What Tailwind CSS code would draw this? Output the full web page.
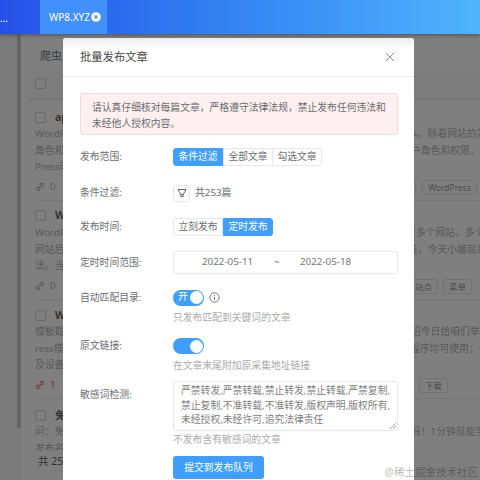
<!DOCTYPE html>
<html lang="zh">
<head>
    <meta charset="UTF-8">
    <title>批量发布文章</title>
    <script src="https://cdn.jsdelivr.net/npm/@tailwindcss/browser@4"></script>
</head>
<body class="font-['Noto_Sans','Noto_Sans_CJK_SC',sans-serif]">
    <div class="relative w-[480px] h-[480px] overflow-hidden bg-white">
        <!-- top bar -->
        <div class="relative z-10 h-[34px] flex bg-gradient-to-r from-[#2750e8] to-[#50b4fd] text-white text-[10px] shadow-[0_1px_4px_rgba(0,0,0,0.4)]">
            <div class="w-[40px] leading-[36px] overflow-hidden">...</div>
            <div class="w-[67px] bg-[#4190fc] flex items-center pl-[9px] gap-[1px]">
                <span>WP8.XYZ</span>
                <svg width="10" height="10" viewBox="0 0 10 10"><circle cx="5" cy="5" r="4.8" fill="#fff"/><path d="M3.3 3.3l3.4 3.4M6.7 3.3l-3.4 3.4" stroke="#4190fc" stroke-width="1.2"/></svg>
            </div>
        </div>

        <!-- page behind the dialog -->
        <div class="flex h-[446px] bg-[#f6f6f6]">
            <div class="w-[17px]"></div>
            <div class="w-[4px] h-[394px] bg-[#cccccc]"></div>
            <div class="flex-1 min-w-0 bg-white overflow-hidden flex flex-col pl-[14px] text-[#b4b4b4] text-[9.8px]">
                <div class="h-[34px] pt-[12px] pl-[5px] text-[11px] leading-[20px] text-[#777]">爬虫</div>
                <div class="h-[32px] -ml-[7px] bg-[#fafafa] border-b-2 border-[#eeeeee] flex items-center pl-[7px]">
                    <span class="w-[11px] h-[11px] border border-[#d4d4d4] rounded-[2px]"></span>
                </div>

                <div class="h-[101px] border-b border-[#eeeeee] flex flex-col pt-[9px] leading-[16.6px]">
                    <div class="flex items-center gap-[9px] h-[16px] mb-[1px]"><span class="w-[11px] h-[11px] border border-[#d4d4d4] rounded-[2px]"></span><b class="text-[#666] text-[10.5px]">ap</b></div>
                    <div class="flex justify-between"><span>WordPress</span><span class="w-[72px] shrink-0 whitespace-nowrap">么&#12290;随着网站的发展</span></div>
                    <div class="flex justify-between"><span>角色和权限</span><span class="w-[69px] shrink-0 whitespace-nowrap">户角色和权限&#12290;当前</span></div>
                    <div>Press时</div>
                    <div class="flex justify-between items-center mt-[3px] pr-[3px]">
                        <span class="flex items-center gap-[5px]"><svg width="10" height="10" viewBox="0 0 10 10" fill="none" stroke="#aaa" stroke-width="1.1"><path d="M4 6l2-2M3.2 4.6L1.8 6a1.6 1.6 0 0 0 2.2 2.2l1.4-1.4M4.6 3.2L6 1.8A1.6 1.6 0 0 1 8.2 4L6.8 5.4"/></svg>0</span>
                        <span class="flex gap-[6px] text-[8.5px] text-[#999]"><span class="border border-[#e4e4e4] rounded-[3px] px-[5px] leading-[13px]">主题</span><span class="border border-[#e4e4e4] rounded-[3px] px-[5px] leading-[13px]">WordPress</span></span>
                    </div>
                </div>

                <div class="h-[99px] border-b border-[#eeeeee] flex flex-col pt-[6px] leading-[16.6px]">
                    <div class="flex items-center gap-[9px] h-[16px] mb-[2px]"><span class="w-[11px] h-[11px] border border-[#d4d4d4] rounded-[2px]"></span><b class="text-[#666] text-[10.5px]">W</b></div>
                    <div class="flex justify-between"><span>WordPress</span><span class="w-[74px] shrink-0 whitespace-nowrap">果多个网站&#65292;多个网站</span></div>
                    <div class="flex justify-between"><span>网站后台</span><span class="w-[72px] shrink-0 whitespace-nowrap">着&#65292;今天小编就来说</span></div>
                    <div>法&#12290;当我</div>
                    <div class="flex justify-between items-center mt-[3px] pr-[8px]">
                        <span class="flex items-center gap-[5px]"><svg width="10" height="10" viewBox="0 0 10 10" fill="none" stroke="#aaa" stroke-width="1.1"><path d="M4 6l2-2M3.2 4.6L1.8 6a1.6 1.6 0 0 0 2.2 2.2l1.4-1.4M4.6 3.2L6 1.8A1.6 1.6 0 0 1 8.2 4L6.8 5.4"/></svg>0</span>
                        <span class="flex gap-[5px] text-[8.5px] text-[#999]"><span class="border border-[#e4e4e4] rounded-[3px] px-[5px] leading-[13px]">站点</span><span class="border border-[#e4e4e4] rounded-[3px] px-[5px] leading-[13px]">菜单</span></span>
                    </div>
                </div>

                <div class="h-[99px] border-b border-[#eeeeee] flex flex-col pt-[7px] leading-[16.6px]">
                    <div class="flex items-center gap-[9px] h-[16px] mb-[1px]"><span class="w-[11px] h-[11px] border border-[#d4d4d4] rounded-[2px]"></span><b class="text-[#666] text-[10.5px]">W</b></div>
                    <div class="flex justify-between"><span>模板截图</span><span class="w-[69px] shrink-0 whitespace-nowrap">绍今日给咱们举荐的</span></div>
                    <div class="flex justify-between"><span>ress模板</span><span class="w-[70px] shrink-0 whitespace-nowrap">程序均可使用&#65307;另外</span></div>
                    <div>及设备访</div>
                    <div class="flex justify-between items-center mt-[3px] pr-[32px]">
                        <span class="flex items-center gap-[5px] text-[#e06a6a]"><svg width="10" height="10" viewBox="0 0 10 10" fill="none" stroke="#e06a6a" stroke-width="1.1"><path d="M4 6l2-2M3.2 4.6L1.8 6a1.6 1.6 0 0 0 2.2 2.2l1.4-1.4M4.6 3.2L6 1.8A1.6 1.6 0 0 1 8.2 4L6.8 5.4"/></svg>1</span>
                        <span class="border border-[#e4e4e4] rounded-[3px] px-[5px] leading-[13px] text-[8.5px] text-[#999]">下载</span>
                    </div>
                </div>

                <div class="h-[52px] overflow-hidden flex flex-col pt-[8px] leading-[16.6px]">
                    <div class="flex items-center gap-[9px] h-[16px] mb-[1px]"><span class="w-[11px] h-[11px] border border-[#d4d4d4] rounded-[2px]"></span><b class="text-[#666] text-[10.5px]">免</b></div>
                    <div class="flex justify-between"><span>问&#65306;免费</span><span class="w-[69px] shrink-0 whitespace-nowrap">码&#65281;1分钟就能学会</span></div>
                    <div>发布名</div>
                </div>
                <div class="h-[21px] pl-[3px] bg-[#fdfdfd] text-[#666] leading-[21px] text-[10.5px]">共 253</div>
            </div>
        </div>

        <!-- dim layer -->
        <div class="absolute inset-x-0 top-[34px] bottom-0 bg-black/50"></div>

        <!-- dialog -->
        <div class="absolute left-[63px] top-[38px] w-[351px] h-[450px] bg-white rounded-[3px] text-[9.8px] text-[#6a6c70]">
            <div class="h-[39px] border-b border-[#eee] bg-gradient-to-b from-[#eeeeee] to-white to-30% rounded-t-[3px] flex items-center justify-between pl-[17px] pr-[19px]">
                <span class="text-[11.3px] text-[#444]">批量发布文章</span>
                <svg width="10" height="10" viewBox="0 0 10 10" stroke="#777" stroke-width="0.8"><path d="M1 1l8 8M9 1l-8 8"/></svg>
            </div>
            <div class="pt-[16px] pl-[17px] pr-[16px]">
                <div class="h-[42px] bg-[#fef0f0] border border-[#fbd9d9] rounded-[3px] pl-[11px] pr-[6px] pt-[6px] leading-[15.5px]">请认真仔细核对每篇文章&#65292;严格遵守法律法规&#65292;禁止发布任何违法和未经他人授权内容&#12290;</div>

                <div class="flex mt-[13px]">
                    <div class="w-[93px] leading-[18px]">发布范围:</div>
                    <div class="flex h-[18px] leading-[16px] text-center">
                        <span class="w-[50px] bg-[#409eff] text-white rounded-l-[3px] border border-[#409eff]">条件过滤</span>
                        <span class="w-[50px] border border-[#e4e7ed]">全部文章</span>
                        <span class="w-[49px] border-y border-r border-[#e4e7ed] rounded-r-[3px]">勾选文章</span>
                    </div>
                </div>

                <div class="flex mt-[18px]">
                    <div class="w-[93px] leading-[18px]">条件过滤:</div>
                    <div class="flex items-center gap-[5px] h-[18px]">
                        <span class="w-[17px] h-[17px] border border-[#e4e7ed] rounded-[3px] flex items-center justify-center">
                            <svg width="10" height="10" viewBox="0 0 10 10" fill="none" stroke="#555" stroke-width="0.9"><path d="M1 1.5h8L6.2 6.5H3.8zM3.8 6.5v2.2h2.4V6.5"/></svg>
                        </span>
                        <span>共253篇</span>
                    </div>
                </div>

                <div class="flex mt-[16px]">
                    <div class="w-[93px] leading-[18px]">发布时间:</div>
                    <div class="flex h-[18px] leading-[16px] text-center">
                        <span class="w-[50px] border border-[#e4e7ed] rounded-l-[3px]">立刻发布</span>
                        <span class="w-[50px] bg-[#409eff] text-white rounded-r-[3px] border border-[#409eff]">定时发布</span>
                    </div>
                </div>

                <div class="flex mt-[15px]">
                    <div class="w-[93px] leading-[23px]">定时时间范围:</div>
                    <div class="w-[225px] h-[23px] border border-[#e4e7ed] rounded-[3px] flex items-center pl-[28px] text-[#777] whitespace-nowrap">
                        <span class="w-[50px]">2022-05-11</span>
                        <span class="ml-[22px] w-[6px]">~</span>
                        <span class="ml-[20px]">2022-05-18</span>
                    </div>
                </div>

                <div class="flex mt-[15px]">
                    <div class="w-[93px] leading-[18px]">自动匹配目录:</div>
                    <div class="flex flex-col">
                        <div class="flex items-center gap-[5px] h-[17px]">
                            <span class="w-[31px] h-[16px] rounded-full bg-[#409eff] flex items-center justify-between pl-[5px] pr-[1.5px] text-white">开<span class="w-[13px] h-[13px] rounded-full bg-white"></span></span>
                            <svg width="11" height="11" viewBox="0 0 11 11" fill="none" stroke="#666"><circle cx="5.5" cy="5.5" r="4.6" stroke-width="0.9"/><path d="M5.5 5v3M5.5 3v1" stroke-width="1"/></svg>
                        </div>
                        <div class="mt-[4px] text-[#aaa] leading-[15px]">只发布匹配到关键词的文章</div>
                    </div>
                </div>

                <div class="flex mt-[13px]">
                    <div class="w-[93px] leading-[16px]">原文链接:</div>
                    <div class="flex flex-col">
                        <span class="w-[31px] h-[16px] rounded-full bg-[#409eff] flex items-center justify-end pr-[1.5px]"><span class="w-[13px] h-[13px] rounded-full bg-white"></span></span>
                        <div class="mt-[4px] text-[#aaa] leading-[15px]">在文章末尾附加原采集地址链接</div>
                    </div>
                </div>

                <div class="flex mt-[8px]">
                    <div class="w-[93px] pt-[6px] leading-[15px]">敏感词检测:</div>
                    <div class="flex flex-col">
                        <div class="relative w-[225px] h-[50px] border border-[#e4e7ed] rounded-[3px] pl-[7px] pr-[4px] pt-[2px] text-[#808080] leading-[14.6px]">严禁转发,严禁转载,禁止转发,禁止转载,严禁复制,禁止复制,不准转载,不准转发,版权声明,版权所有,未经授权,未经许可,追究法律责任
                            <svg class="absolute right-[1px] bottom-[1px]" width="7" height="7" viewBox="0 0 7 7" stroke="#888" stroke-width="0.7"><path d="M1 7l6-6M4 7l3-3"/></svg>
                        </div>
                        <div class="mt-[1px] text-[#aaa] leading-[15px]">不发布含有敏感词的文章</div>
                    </div>
                </div>

                <div class="mt-[9px] ml-[93px] w-[91px] h-[23px] rounded-[3px] bg-[#409eff] text-white text-center leading-[23px]">提交到发布队列</div>
            </div>
        </div>

        <div class="absolute right-[2px] bottom-[1px] text-[10.5px] leading-[14px] text-black/30">@稀土掘金技术社区</div>
    </div>
</body>
</html>
